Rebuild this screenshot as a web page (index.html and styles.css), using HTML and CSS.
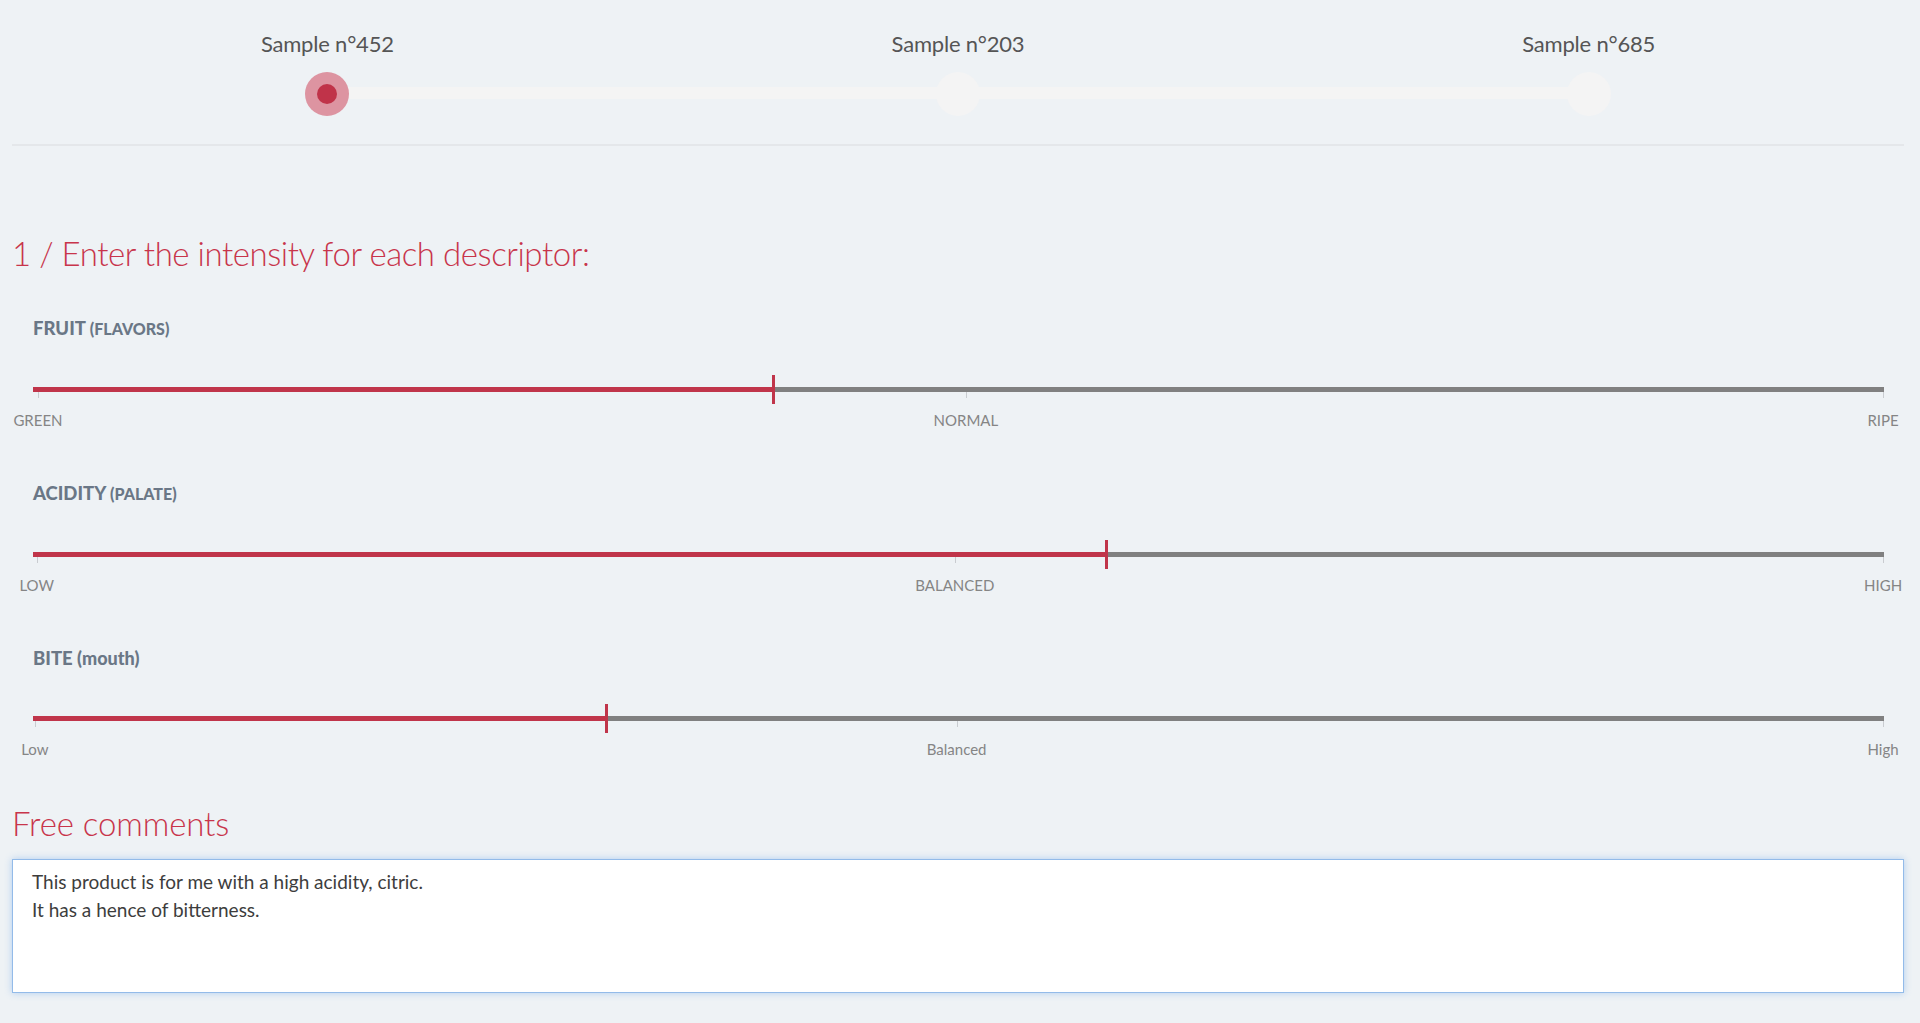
FILE: index.html
```html
<!DOCTYPE html>
<html lang="en">
<head>
<meta charset="utf-8">
<title>Tasting sheet</title>
<link rel="stylesheet" href="styles.css">
</head>
<body>
<div class="page">
  <div class="steps">
    <div class="step active">
      <div class="step-label">Sample n°452</div>
      <div class="step-dot"><span class="step-core"></span></div>
    </div>
    <div class="step">
      <div class="step-label">Sample n°203</div>
      <div class="step-dot"></div>
    </div>
    <div class="step last">
      <div class="step-label">Sample n°685</div>
      <div class="step-dot"></div>
    </div>
  </div>

  <h2 class="section-title first">1 / Enter the intensity for each descriptor:</h2>

  <div class="slider">
    <div class="slider-label">FRUIT <small>(FLAVORS)</small></div>
    <div class="rail">
      <div class="track"></div>
      <div class="fill" style="width:40.03%"></div>
      <div class="tick" style="left:0.27%"></div>
      <div class="tick" style="left:50.4%"></div>
      <div class="tick" style="left:99.95%"></div>
      <div class="handle" style="left:40.03%"></div>
    </div>
    <div class="marks">
      <span class="mark" style="left:0.27%">GREEN</span>
      <span class="mark" style="left:50.4%">NORMAL</span>
      <span class="mark" style="left:99.95%">RIPE</span>
    </div>
  </div>

  <div class="slider">
    <div class="slider-label">ACIDITY <small>(PALATE)</small></div>
    <div class="rail">
      <div class="track"></div>
      <div class="fill" style="width:57.97%"></div>
      <div class="tick" style="left:0.2%"></div>
      <div class="tick" style="left:49.8%"></div>
      <div class="tick" style="left:99.95%"></div>
      <div class="handle" style="left:57.97%"></div>
    </div>
    <div class="marks">
      <span class="mark" style="left:0.2%">LOW</span>
      <span class="mark" style="left:49.8%">BALANCED</span>
      <span class="mark" style="left:99.95%">HIGH</span>
    </div>
  </div>

  <div class="slider">
    <div class="slider-label">BITE <small class="lower">(mouth)</small></div>
    <div class="rail">
      <div class="track"></div>
      <div class="fill" style="width:31.01%"></div>
      <div class="tick" style="left:0.1%"></div>
      <div class="tick" style="left:49.9%"></div>
      <div class="tick" style="left:99.95%"></div>
      <div class="handle" style="left:31.01%"></div>
    </div>
    <div class="marks">
      <span class="mark" style="left:0.1%">Low</span>
      <span class="mark" style="left:49.9%">Balanced</span>
      <span class="mark" style="left:99.95%">High</span>
    </div>
  </div>

  <h2 class="section-title comments">Free comments</h2>
  <textarea class="comment-box">This product is for me with a high acidity, citric.
It has a hence of bitterness.</textarea>
</div>
</body>
</html>
```

FILE: styles.css
```css
html, body {
  margin: 0;
  padding: 0;
}

body {
  background: #eef2f5;
  font-family: "Lato", "Liberation Sans", sans-serif;
  color: #444;
  height: 1023px;
  overflow: hidden;
}

.page {
  padding: 0 16px 0 12px;
}

/* ---------- stepper ---------- */
.steps {
  display: grid;
  grid-template-columns: 1fr 1fr 1fr;
  padding-top: 29px;
  padding-bottom: 28px;
  border-bottom: 2px solid #e4e7ea;
}

.step {
  position: relative;
  display: flex;
  flex-direction: column;
  align-items: center;
}

.step::after {
  content: "";
  position: absolute;
  left: 50%;
  width: 100%;
  top: 58px;
  height: 12px;
  background: #f4f4f4;
  z-index: 0;
}

.step.last::after {
  display: none;
}

.step-label {
  font-size: 22px;
  line-height: 30px;
  letter-spacing: -0.2px;
  color: #555;
}

.step-dot {
  position: relative;
  z-index: 1;
  margin-top: 13px;
  width: 44px;
  height: 44px;
  border-radius: 50%;
  background: #f4f4f4;
  display: flex;
  align-items: center;
  justify-content: center;
}

.step.active .step-dot {
  background: #dd94a1;
}

.step-core {
  width: 20px;
  height: 20px;
  border-radius: 50%;
  background: #c03349;
}

/* ---------- titles ---------- */
.section-title {
  margin: 0;
  font-size: 33px;
  line-height: 41px;
  font-weight: 300;
  color: #c8354b;
}

.section-title.first {
  margin-top: 87px;
  margin-bottom: 44px;
  letter-spacing: -0.45px;
}

.section-title.comments {
  margin-top: 44px;
  margin-bottom: 15px;
  letter-spacing: -0.1px;
}

/* ---------- sliders ---------- */
.slider {
  padding: 0 20px 0 21px;
}

.slider + .slider {
  margin-top: 53px;
}

.slider-label {
  font-size: 18.5px;
  line-height: 20px;
  font-weight: 900;
  color: #6a7786;
}

.slider-label small {
  font-size: 16px;
}

.slider-label small.lower {
  font-size: 18px;
}

.rail {
  position: relative;
  height: 30px;
  margin-top: 35px;
}

.track {
  position: absolute;
  left: 0;
  right: 0;
  top: 13px;
  height: 5px;
  background: #808080;
}

.fill {
  position: absolute;
  left: 0;
  top: 13px;
  height: 5px;
  background: #c0354a;
}

.tick {
  position: absolute;
  top: 18px;
  width: 1px;
  height: 6px;
  background: #c9ccd0;
}

.handle {
  position: absolute;
  top: 1px;
  width: 3px;
  height: 29px;
  margin-left: -1.5px;
  background: #c0354a;
}

.marks {
  position: relative;
  height: 20px;
  margin-top: 6px;
}

.mark {
  position: absolute;
  top: 0;
  transform: translateX(-50%);
  font-size: 15px;
  line-height: 20px;
  color: #858585;
  white-space: nowrap;
}

/* ---------- comments ---------- */
.comment-box {
  display: block;
  box-sizing: border-box;
  width: 100%;
  height: 134px;
  margin: 0;
  padding: 8px 19px;
  border: 1px solid #93bbe9;
  border-radius: 0;
  background: #fff;
  box-shadow: 0 0 7px rgba(102, 160, 233, 0.45);
  font-family: "Lato", "Liberation Sans", sans-serif;
  font-size: 19px;
  line-height: 28px;
  color: #3d3d3d;
  resize: none;
  outline: none;
}
```
